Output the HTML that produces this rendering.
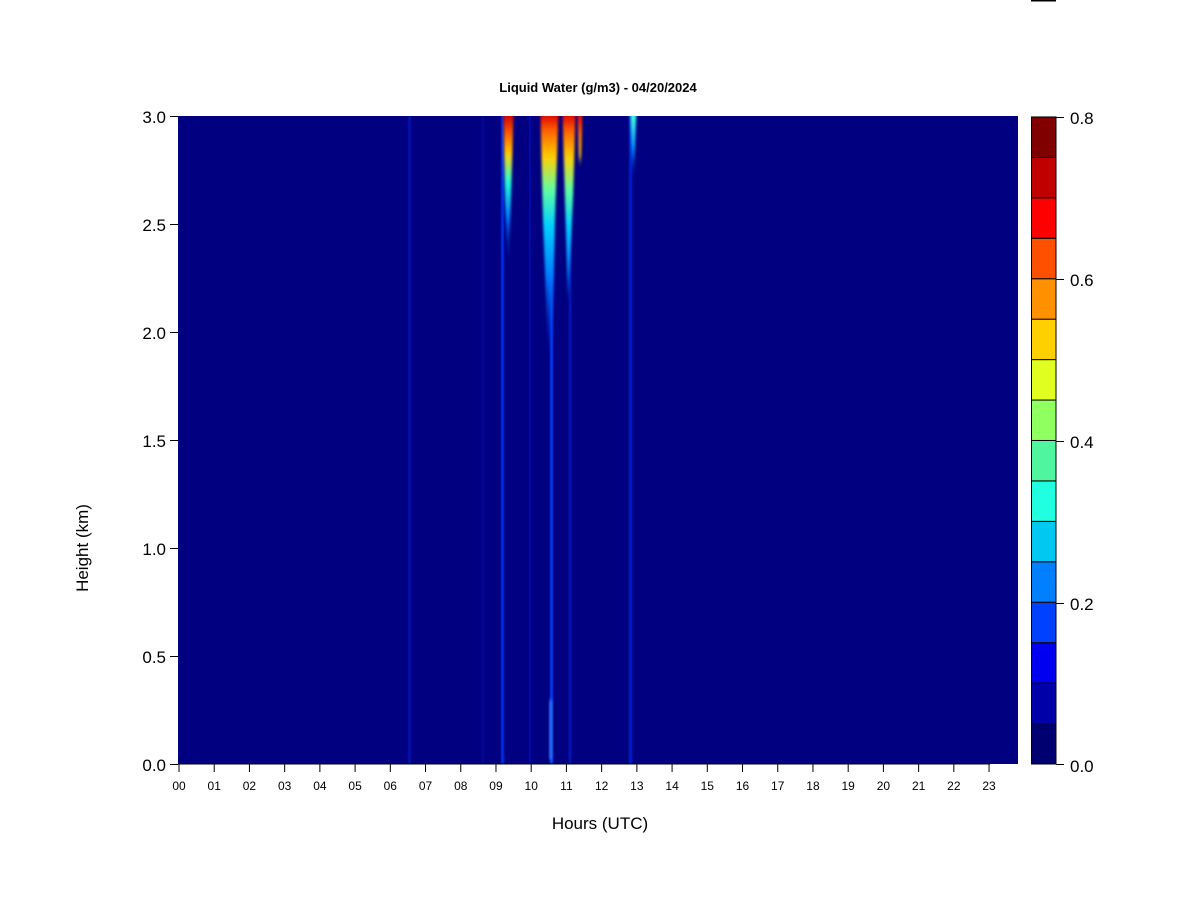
<!DOCTYPE html>
<html><head><style>
body{margin:0;width:1200px;height:900px;background:#fff;overflow:hidden;font-family:"Liberation Sans",Arial,sans-serif;}
</style></head><body>
<svg width="1200" height="900" xmlns="http://www.w3.org/2000/svg" font-family="Liberation Sans, Arial, sans-serif">
<defs>
<clipPath id="cp"><rect x="178" y="116" width="840" height="648"/></clipPath>
<filter id="b1" x="-50%" y="-10%" width="200%" height="120%"><feGaussianBlur stdDeviation="1.4 4"/></filter>
<filter id="b0" x="-50%" y="-10%" width="200%" height="120%"><feGaussianBlur stdDeviation="0.7 2"/></filter>
<linearGradient id="gA" x1="0" y1="116" x2="0" y2="270" gradientUnits="userSpaceOnUse">
<stop offset="0" stop-color="#d00000"/><stop offset="0.12" stop-color="#ff6000"/><stop offset="0.25" stop-color="#ffd000"/><stop offset="0.42" stop-color="#20ffd0"/><stop offset="0.65" stop-color="#0080ff"/><stop offset="1" stop-color="#0010c0" stop-opacity="0"/></linearGradient>
<linearGradient id="gB" x1="0" y1="116" x2="0" y2="360" gradientUnits="userSpaceOnUse">
<stop offset="0" stop-color="#e00000"/><stop offset="0.06" stop-color="#ff6000"/><stop offset="0.17" stop-color="#ffd000"/><stop offset="0.3" stop-color="#60ffa0"/><stop offset="0.45" stop-color="#00d0ff"/><stop offset="0.65" stop-color="#0080ff"/><stop offset="1" stop-color="#0020e0" stop-opacity="0"/></linearGradient>
<linearGradient id="gE" x1="0" y1="116" x2="0" y2="180" gradientUnits="userSpaceOnUse">
<stop offset="0" stop-color="#40ffe0"/><stop offset="0.5" stop-color="#0090ff"/><stop offset="1" stop-color="#0010c0" stop-opacity="0"/></linearGradient>
</defs>
<rect x="1031" y="0" width="25" height="1.5" fill="#000"/>
<text x="598" y="92" font-size="13" font-weight="bold" text-anchor="middle">Liquid Water (g/m3) - 04/20/2024</text>
<rect x="178" y="116" width="840" height="648" fill="#000080"/>
<g clip-path="url(#cp)">
<g filter="url(#b0)" opacity="0.9">
<rect x="408" y="100" width="3" height="670" fill="#0018c8" opacity="0.7"/>
<rect x="501" y="100" width="3" height="670" fill="#0030f0"/>
<rect x="482" y="100" width="2" height="670" fill="#0010b0" opacity="0.7"/>
<rect x="529" y="100" width="2" height="670" fill="#0010c0" opacity="0.8"/>
<rect x="550" y="100" width="3" height="670" fill="#0040ff"/>
<rect x="569" y="100" width="2" height="670" fill="#0020d0"/>
<rect x="629" y="100" width="3" height="670" fill="#0020d8"/>
<rect x="549" y="700" width="4" height="60" fill="#2070ff"/>
</g>
<g filter="url(#b1)">
<polygon points="503,95 514,95 511,200 508,270 505,200" fill="url(#gA)"/>
<polygon points="540,95 559,95 555,220 552,350 548,350 543,220" fill="url(#gB)"/>
<polygon points="562,95 576,95 573,200 568,300 565,200" fill="url(#gB)"/>
<polygon points="577,95 583,95 581,160 579,160" fill="url(#gB)"/>
<polygon points="630,95 637,95 634,180 632,180" fill="url(#gE)"/>
</g>
</g>
<line x1="178" y1="764" x2="990" y2="764" stroke="#000"/>
<g stroke="#000">
<line x1="170" y1="116.5" x2="178" y2="116.5"/><line x1="170" y1="224.5" x2="178" y2="224.5"/><line x1="170" y1="332.5" x2="178" y2="332.5"/><line x1="170" y1="440.5" x2="178" y2="440.5"/><line x1="170" y1="548.5" x2="178" y2="548.5"/><line x1="170" y1="656.5" x2="178" y2="656.5"/><line x1="170" y1="764.5" x2="178" y2="764.5"/>
</g>
<g font-size="17" text-anchor="end">
<text x="166" y="123">3.0</text><text x="166" y="231">2.5</text><text x="166" y="339">2.0</text><text x="166" y="447">1.5</text><text x="166" y="555">1.0</text><text x="166" y="663">0.5</text><text x="166" y="771">0.0</text>
</g>
<g id="xt" stroke="#000"></g>
<g font-size="12" text-anchor="middle" id="xl"></g>
<text x="600" y="829" font-size="17" text-anchor="middle">Hours (UTC)</text>
<text transform="translate(88,548) rotate(-90)" font-size="17" text-anchor="middle">Height (km)</text>
<g id="cb" stroke="#000" stroke-width="1"></g>
<g font-size="17">
<text x="1070" y="124">0.8</text><text x="1070" y="286">0.6</text><text x="1070" y="448">0.4</text><text x="1070" y="610">0.2</text><text x="1070" y="772">0.0</text>
</g>
<g stroke="#000"><line x1="1056" y1="117.5" x2="1064" y2="117.5"/><line x1="1056" y1="279.5" x2="1064" y2="279.5"/><line x1="1056" y1="441.5" x2="1064" y2="441.5"/><line x1="1056" y1="603.5" x2="1064" y2="603.5"/><line x1="1056" y1="764.5" x2="1064" y2="764.5"/></g>
</svg>
<script>
var ns="http://www.w3.org/2000/svg";
var xt=document.getElementById("xt"),xl=document.getElementById("xl");
for(var i=0;i<24;i++){var x=179+i*35.22;
var l=document.createElementNS(ns,"line");l.setAttribute("x1",x);l.setAttribute("x2",x);l.setAttribute("y1",764);l.setAttribute("y2",772);xt.appendChild(l);
var t=document.createElementNS(ns,"text");t.setAttribute("x",x);t.setAttribute("y",790);t.textContent=(i<10?"0":"")+i;xl.appendChild(t);}
var cols=["#000070","#0000a8","#0000f0","#0040ff","#0080ff","#00c8f0","#20ffe0","#50f5a0","#90ff60","#e0ff20","#ffd000","#ff9000","#ff5000","#ff0000","#c00000","#800000"];
var cb=document.getElementById("cb");
for(var i=0;i<16;i++){var r=document.createElementNS(ns,"rect");var y0=764-(i+1)*40.44;
r.setAttribute("x",1031.5);r.setAttribute("y",y0);r.setAttribute("width",24.5);r.setAttribute("height",40.44);r.setAttribute("fill",cols[i]);cb.appendChild(r);}
</script>
</body></html>
